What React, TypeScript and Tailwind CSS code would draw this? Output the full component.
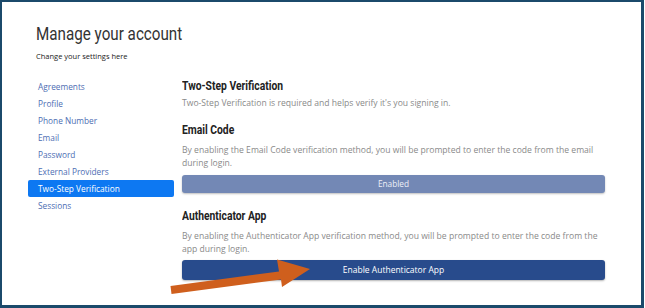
import React from "react";

const items = [
  "Agreements",
  "Profile",
  "Phone Number",
  "Email",
  "Password",
  "External Providers",
  "Two-Step Verification",
  "Sessions",
];

function Heading({ children, className = "" }: { children: React.ReactNode; className?: string }) {
  return (
    <h2
      className={
        "h-[16px] text-[12px] leading-[16px] font-bold text-[#222] font-['Roboto'] origin-left scale-x-[0.86] whitespace-nowrap " +
        className
      }
    >
      {children}
    </h2>
  );
}

export default function App() {
  return (
    <div className="relative w-[645px] h-[308px] bg-white overflow-hidden">
      <div className="w-[644px] h-[308px] border-l-2 border-t-2 border-r-[3px] border-b-[3px] border-[#1b4a6b] bg-white pl-[26px] pt-[20px] flex flex-col">
        <h1 className="ml-[8px] text-[19px] leading-[23px] text-[#333] font-normal font-['Roboto'] origin-left scale-x-[0.8] whitespace-nowrap">
          Manage your account
        </h1>
        <p className="ml-[8px] mt-[6px] text-[7.5px] leading-[10px] text-[#222] font-medium font-['Open_Sans']">
          Change your settings here
        </p>
        <div className="mt-[17px] flex gap-[8px]">
          <nav className="w-[146px] flex flex-col font-['Open_Sans']">
            {items.map((it) => {
              const active = it === "Two-Step Verification";
              return (
                <div
                  key={it}
                  className={
                    active
                      ? "h-[17px] leading-[17px] pl-[10px] text-[8.3px] rounded-[2px] bg-[#0d78f2] text-white"
                      : "h-[17px] leading-[17px] pl-[10px] text-[8.3px] text-[#4d6db3]"
                  }
                >
                  {it}
                </div>
              );
            })}
          </nav>
          <div className="w-[423px] flex flex-col font-['Open_Sans']">
            <Heading>Two-Step Verification</Heading>
            <p className="mt-[3px] text-[8.6px] leading-[13px] text-[#8a8a8a]">
              Two-Step Verification is required and helps verify it's you signing in.
            </p>
            <Heading className="mt-[12px]">Email Code</Heading>
            <p className="mt-[6px] text-[8.6px] leading-[13px] text-[#8a8a8a]">
              By enabling the Email Code verification method, you will be prompted to enter the code from the email during login.
            </p>
            <button className="mt-[5px] h-[18px] w-full rounded-[3px] bg-[#7388b5] text-[8.3px] text-[#eef1f8] shadow-[0_1px_2px_rgba(0,0,0,0.25)]">
              Enabled
            </button>
            <Heading className="mt-[15px]">Authenticator App</Heading>
            <p className="mt-[6px] text-[8.6px] leading-[13px] text-[#8a8a8a]">
              By enabling the Authenticator App verification method, you will be prompted to enter the code from the app during login.
            </p>
            <button className="mt-[4px] h-[20px] w-full rounded-[3px] bg-[#284b8c] text-[8.5px] text-white shadow-[0_1px_2px_rgba(0,0,0,0.3)]">
              Enable Authenticator App
            </button>
          </div>
        </div>
      </div>
      <svg className="absolute left-0 top-0 pointer-events-none" width="645" height="308">
        <polygon
          points="170.5,286 279,271.5 277,259.5 310,269 282,287 281,279.5 171.5,294"
          fill="#cf5f1d"
        />
      </svg>
    </div>
  );
}
